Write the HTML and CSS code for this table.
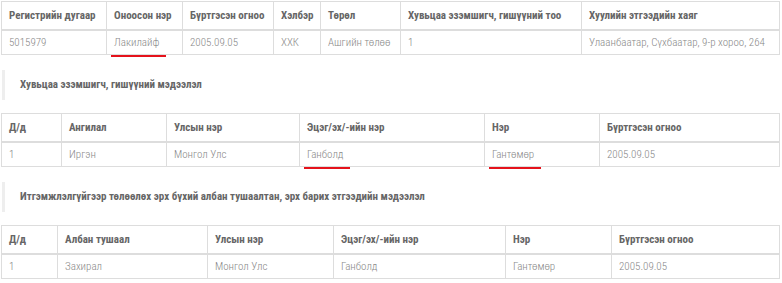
FILE: index.html
```html
<!DOCTYPE html>
<html lang="mn">
<head>
<meta charset="utf-8">
<link rel="stylesheet" href="styles.css">
</head>
<body>
<div class="page">
  <table class="grid t1">
    <colgroup><col style="width:105px"><col style="width:76px"><col style="width:91px"><col style="width:47px"><col style="width:80px"><col style="width:181px"><col></colgroup>
    <thead><tr><th>Регистрийн дугаар</th><th>Оноосон нэр</th><th>Бүртгэсэн огноо</th><th>Хэлбэр</th><th>Төрөл</th><th>Хувьцаа эзэмшигч, гишүүний тоо</th><th>Хуулийн этгээдийн хаяг</th></tr></thead>
    <tbody><tr><td>5015979</td><td><span class="mark">Лакилайф</span></td><td>2005.09.05</td><td>ХХК</td><td>Ашгийн төлөө</td><td>1</td><td>Улаанбаатар, Сүхбаатар, 9-р хороо, 264</td></tr></tbody>
  </table>

  <div class="section-title">Хувьцаа эзэмшигч, гишүүний мэдээлэл</div>

  <table class="grid t2">
    <colgroup><col style="width:60px"><col style="width:105px"><col style="width:133px"><col style="width:185px"><col style="width:115px"><col></colgroup>
    <thead><tr><th>Д/д</th><th>Ангилал</th><th>Улсын нэр</th><th>Эцэг/эх/-ийн нэр</th><th>Нэр</th><th>Бүртгэсэн огноо</th></tr></thead>
    <tbody><tr><td>1</td><td>Иргэн</td><td>Монгол Улс</td><td><span class="mark">Ганболд</span></td><td><span class="mark">Гантөмөр</span></td><td>2005.09.05</td></tr></tbody>
  </table>

  <div class="section-title">Итгэмжлэлгүйгээр төлөөлөх эрх бүхий албан тушаалтан, эрх барих этгээдийн мэдээлэл</div>

  <table class="grid t3">
    <colgroup><col style="width:56px"><col style="width:150px"><col style="width:126px"><col style="width:172px"><col style="width:106px"><col></colgroup>
    <thead><tr><th>Д/д</th><th>Албан тушаал</th><th>Улсын нэр</th><th>Эцэг/эх/-ийн нэр</th><th>Нэр</th><th>Бүртгэсэн огноо</th></tr></thead>
    <tbody><tr><td>1</td><td>Захирал</td><td>Монгол Улс</td><td>Ганболд</td><td>Гантөмөр</td><td>2005.09.05</td></tr></tbody>
  </table>
</div>
</body>
</html>
```
FILE: styles.css
```css
html, body {
  margin: 0;
  padding: 0;
  background: #fff;
}
.page {
  padding: 1px 2px 0 1px;
  font-family: "Roboto Condensed", "Liberation Sans Narrow", Roboto, sans-serif;
  font-stretch: 75%;
}
.grid {
  width: 779px;
  border-collapse: collapse;
  table-layout: fixed;
  font-size: 11px;
}
.grid th, .grid td {
  border: 1px solid #ddd;
  text-align: left;
  padding: 0 8px 0 7px;
  white-space: nowrap;
}
.grid th {
  height: 27px;
  color: #666;
  font-weight: 700;
  border-bottom: 2px solid #ddd;
}
.grid td {
  height: 23px;
  color: #888;
  font-weight: 300;
  font-size: 11px;
}
.mark {
  position: relative;
  display: inline-block;
}
.mark::after {
  content: "";
  position: absolute;
  left: -3px;
  right: -7px;
  bottom: -8px;
  height: 2px;
  background: #e5121b;
}
.section-title {
  margin: 15px 0 13px 1px;
  height: 30px;
  line-height: 30px;
  border-left: 3px solid #eee;
  padding-left: 15px;
  color: #666;
  font-weight: 700;
  font-size: 11px;
}
```
